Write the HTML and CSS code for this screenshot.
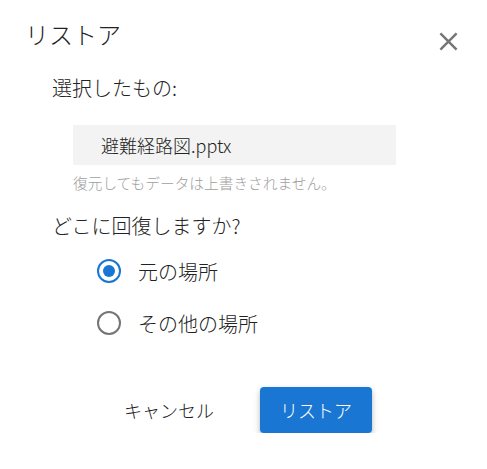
FILE: index.html
```html
<!DOCTYPE html>
<html lang="ja">
<head>
    <meta charset="UTF-8">
    <meta name="viewport" content="width=device-width, initial-scale=1.0">
    <title>リストア</title>
    <link rel="stylesheet" href="styles.css">
</head>
<body>
    <div class="dialog">
        <!-- ヘッダー -->
        <div class="dialog-header">
            <h1 class="dialog-title">リストア</h1>
            <button class="close-button" aria-label="閉じる">
                <svg width="29" height="29" viewBox="0 0 24 24">
                    <path d="M5.3 5.3 L18.7 18.7 M18.7 5.3 L5.3 18.7" stroke="#757575" stroke-width="2" fill="none"/>
                </svg>
            </button>
        </div>

        <p class="section-label">選択したもの:</p>
        <div class="file-box">避難経路図.pptx</div>
        <p class="hint">復元してもデータは上書きされません。</p>

        <p class="section-label question">どこに回復しますか?</p>
        <div class="radio-group">
            <label class="radio-row">
                <span class="radio checked"></span>
                <span class="radio-label">元の場所</span>
            </label>
            <label class="radio-row">
                <span class="radio"></span>
                <span class="radio-label">その他の場所</span>
            </label>
        </div>

        <!-- ボタン -->
        <div class="dialog-actions">
            <button class="button button-text">キャンセル</button>
            <button class="button button-primary">リストア</button>
        </div>
    </div>
</body>
</html>
```

FILE: styles.css
```css
body {
    margin: 0;
    padding: 0;
    font-family: "Noto Sans CJK JP", "Noto Sans", sans-serif;
    font-weight: 300;
    color: #222;
    background: #fff;
}

.dialog {
    padding: 18px 24px 0 24px;
}

.dialog-header {
    display: flex;
    justify-content: space-between;
    align-items: flex-start;
    height: 32px;
}

.dialog-title {
    margin: 0;
    font-size: 24px;
    font-weight: 300;
    line-height: 32px;
    padding-left: 1px;
}

.close-button {
    margin-top: 9px;
    padding: 0;
    border: none;
    background: none;
    width: 29px;
    height: 29px;
    cursor: pointer;
}

.close-button svg {
    display: block;
}

.section-label {
    margin: 24px 0 0 28px;
    font-size: 20px;
    line-height: 28px;
}

.file-box {
    margin: 23px 0 0 49px;
    width: 323px;
    height: 40px;
    line-height: 40px;
    box-sizing: border-box;
    padding-left: 28px;
    background-color: #f3f3f3;
    font-size: 18px;
}

.hint {
    margin: 8px 0 0 49px;
    font-size: 14.7px;
    line-height: 20px;
    color: #9e9e9e;
}

.question {
    margin-top: 19px;
}

.radio-group {
    margin-top: 5px;
}

.radio-row {
    display: flex;
    align-items: center;
    height: 52px;
    padding-left: 73px;
    cursor: pointer;
}

.radio {
    width: 24px;
    height: 24px;
    box-sizing: border-box;
    border: 2.8px solid #757575;
    border-radius: 50%;
    display: flex;
    justify-content: center;
    align-items: center;
}

.radio.checked {
    border-color: #1976d2;
}

.radio.checked::after {
    content: "";
    width: 12px;
    height: 12px;
    border-radius: 50%;
    background-color: #1976d2;
}

.radio-label {
    margin-left: 17px;
    font-size: 20px;
}

.dialog-actions {
    display: flex;
    align-items: center;
    margin-top: 38px;
    padding-left: 76px;
    gap: 22px;
}

.button {
    font-family: inherit;
    font-weight: 300;
    font-size: 18px;
    border: none;
    border-radius: 4px;
    height: 46px;
    cursor: pointer;
}

.button-text {
    background: none;
    color: #222;
    padding: 0 24px;
}

.button-primary {
    width: 112px;
    background-color: #1976d2;
    color: #fff;
    box-shadow: 0 2px 4px rgba(0, 0, 0, 0.2), 0 4px 10px rgba(0, 0, 0, 0.12);
}
```
